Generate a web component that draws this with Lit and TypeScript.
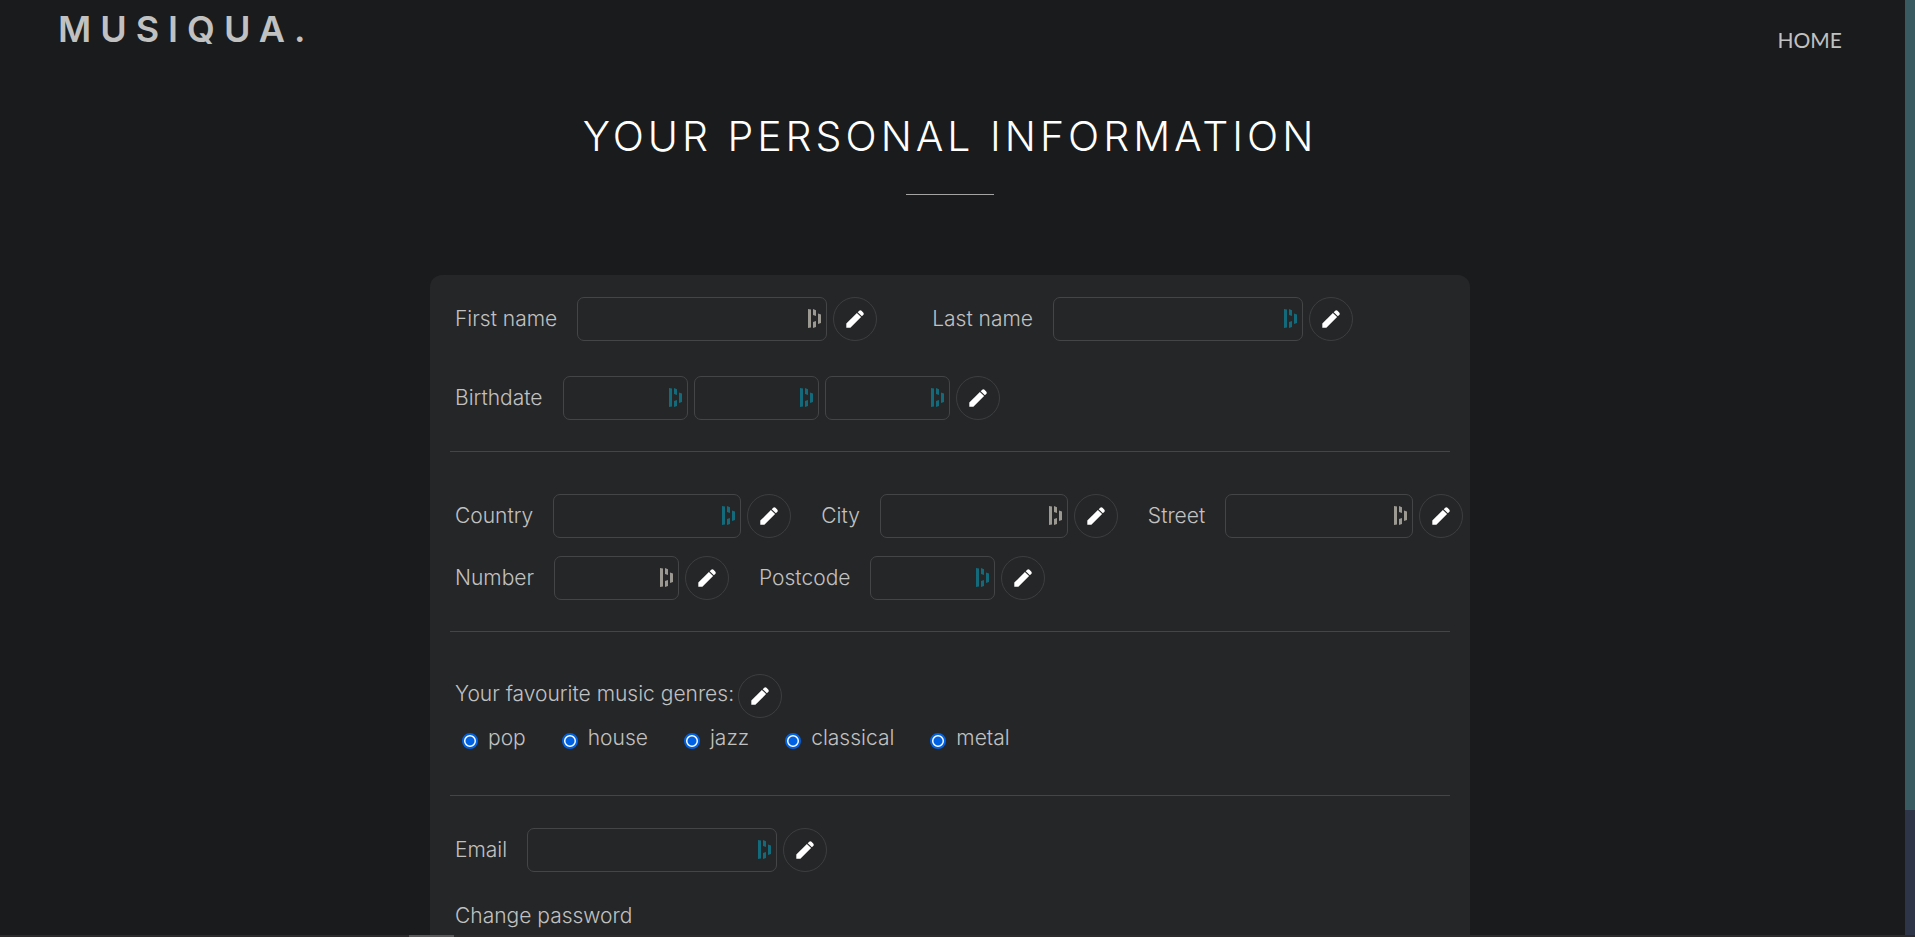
import { LitElement, html, css, svg } from "lit";
import { customElement } from "lit/decorators.js";
import { classMap } from "lit/directives/class-map.js";

type Size = "wide" | "medium" | "small";

interface Box {
  name: string;
  tone: "teal" | "grey";
}

interface Field {
  label: string;
  size: Size;
  boxes: Box[];
}

const field = (label: string, size: Size, tone: Box["tone"]): Field => ({
  label,
  size,
  boxes: [{ name: label, tone }],
});

const NAME_ROW = [field("First name", "wide", "grey"), field("Last name", "wide", "teal")];
const BIRTH_ROW: Field[] = [
  {
    label: "Birthdate",
    size: "small",
    boxes: [
      { name: "Birth day", tone: "teal" },
      { name: "Birth month", tone: "teal" },
      { name: "Birth year", tone: "teal" },
    ],
  },
];
const ADDRESS_ROW = [
  field("Country", "medium", "teal"),
  field("City", "medium", "grey"),
  field("Street", "medium", "grey"),
];
const NUMBER_ROW = [field("Number", "small", "grey"), field("Postcode", "small", "teal")];
const EMAIL_ROW = [field("Email", "wide", "teal")];
const GENRES = ["pop", "house", "jazz", "classical", "metal"];

const pencil = svg`
  <path d="M0.3 17.8 V13.6 L10.9 3 L15.1 7.1 L4.4 17.8 Z" />
  <path d="M11.7 2.2 L13 0.9 Q14.2 -0.2 15.5 0.8 L17.2 2.6 Q18.3 4 17.2 5.1 L15.9 6.3 Z" />`;

const bars = svg`
  <path d="M0 0 L3 0.5 V18.5 L0 19 Z" />
  <path d="M5 0 L8 1.2 V7 L5 6 Z" />
  <path d="M5 13 L8 12 V18 L5 19 Z" />
  <path d="M10 4.5 L13 5.5 V14 L10 15 Z" />`;

@customElement("app-root")
export class AppRoot extends LitElement {
  static styles = css`
    :host {
      display: block;
      position: relative;
      height: 100vh;
      overflow: hidden;
      background: #191b1c;
      color: #c1c1c1;
      font-family: Inter, "Liberation Sans", sans-serif;
      font-size: 21px;
      font-weight: 300;
      line-height: 28px;
    }
    * {
      box-sizing: border-box;
    }
    .frame {
      display: grid;
      grid-template-columns: minmax(0, 1fr) 10px;
      height: 100%;
    }
    .page {
      overflow: hidden;
      padding-right: 5px;
    }
    .track {
      background: #2f3548;
    }
    .thumb {
      height: 810px;
      background: #3a5a62;
    }
    .header {
      display: flex;
      justify-content: space-between;
      align-items: flex-start;
      padding: 8px 58px 0;
      height: 76px;
    }
    .logo {
      color: #c1c1c1;
      text-decoration: none;
      font-size: 36px;
      line-height: 42px;
      font-weight: 600;
      letter-spacing: 9px;
    }
    .home {
      display: block;
      color: #c1c1c1;
      text-decoration: none;
      font-family: Lato, sans-serif;
      font-weight: 400;
      padding-top: 18px;
    }
    .title {
      margin: 32px 0 0;
      text-align: center;
      color: #fff;
      font-size: 41px;
      line-height: 56px;
      font-weight: 300;
      letter-spacing: 4px;
    }
    .rule {
      width: 88px;
      height: 1px;
      margin: 30px auto 80px;
      border: 0;
      background: #a4a4a4;
    }
    .panel {
      width: min(1040px, 100% - 40px);
      margin: 0 auto;
      padding: 22px 0 60px;
      border-radius: 12px;
      background: #252628;
    }
    .section {
      margin: 0 20px;
      padding: 0 0 31px 5px;
      border-bottom: 1px solid #434547;
    }
    .section + .section {
      padding-top: 42px;
    }
    .section + .section.email {
      padding-top: 32px;
      border: 0;
    }
    .row {
      display: flex;
      column-gap: 30px;
      margin-right: -20px;
    }
    .row.names {
      column-gap: 55px;
    }
    .loose {
      margin-top: 35px;
    }
    .tight {
      margin-top: 18px;
    }
    .field {
      display: flex;
      align-items: center;
      gap: 6px;
    }
    .label {
      margin-right: 14px;
      white-space: nowrap;
    }
    .box {
      position: relative;
      display: flex;
    }
    .input {
      width: 250px;
      height: 44px;
      padding: 0 28px 0 12px;
      border: 1px solid #434547;
      border-radius: 7px;
      background: transparent;
      color: inherit;
      font: inherit;
    }
    .input.medium {
      width: 188px;
    }
    .input.small {
      width: 125px;
    }
    .bars {
      position: absolute;
      right: 6px;
      top: 12px;
      width: 13px;
      height: 19px;
      fill: #126a7b;
      pointer-events: none;
    }
    .bars.grey {
      fill: #9c9892;
    }
    .edit {
      display: grid;
      place-items: center;
      width: 44px;
      height: 44px;
      padding: 0;
      border: 1px solid #3c3e40;
      border-radius: 50%;
      background: transparent;
      cursor: pointer;
    }
    .pencil {
      width: 18px;
      height: 18px;
      fill: #fff;
    }
    .genres-head {
      display: flex;
      align-items: center;
      gap: 4px;
    }
    .genres-title {
      padding-bottom: 4px;
    }
    .genres {
      display: flex;
      column-gap: 36px;
      padding: 6px 0 12px 7px;
    }
    .genre {
      display: flex;
      align-items: center;
      gap: 10px;
    }
    .radio {
      appearance: none;
      width: 16px;
      height: 16px;
      margin: 6px 0 0;
      border: 2px solid #0062e3;
      border-radius: 50%;
      background: radial-gradient(circle, #0062e3 4px, #fff 5px);
    }
    .password {
      margin: 30px 0 0;
      font-size: 21px;
      font-weight: 300;
      line-height: 28px;
    }
    .bottom {
      position: absolute;
      left: 0;
      right: 0;
      bottom: 0;
      height: 2px;
      padding-left: 409px;
      background: #2c2a2a;
    }
    .bottom-mark {
      width: 45px;
      height: 2px;
      background: #5a5858;
    }
  `;

  private renderEdit(what: string) {
    return html`<button class="edit" type="button" aria-label="Edit ${what}">
      <svg class="pencil" viewBox="0 0 18 18" aria-hidden="true">${pencil}</svg>
    </button>`;
  }

  private renderField(f: Field) {
    const id = (b: Box) => b.name.toLowerCase().replace(" ", "-");
    return html`<div class="field">
      <label class="label" for=${id(f.boxes[0])}>${f.label}</label>
      ${f.boxes.map(
        (b) => html`<div class="box">
          <input
            class=${classMap({ input: true, [f.size]: true })}
            id=${id(b)}
            type="text"
            aria-label=${b.name}
          />
          <svg class=${classMap({ bars: true, [b.tone]: true })} viewBox="0 0 13 19" aria-hidden="true">
            ${bars}
          </svg>
        </div>`
      )}
      ${this.renderEdit(f.label)}
    </div>`;
  }

  render() {
    return html`
      <div class="frame">
        <div class="page">
          <header class="header">
            <a class="logo" href="#">MUSIQUA.</a>
            <nav><a class="home" href="#">HOME</a></nav>
          </header>
          <main>
            <h1 class="title">YOUR PERSONAL INFORMATION</h1>
            <hr class="rule" />
            <form class="panel">
              <div class="section">
                <div class="row names">${NAME_ROW.map((f) => this.renderField(f))}</div>
                <div class="row loose">${BIRTH_ROW.map((f) => this.renderField(f))}</div>
              </div>
              <div class="section">
                <div class="row">${ADDRESS_ROW.map((f) => this.renderField(f))}</div>
                <div class="row tight">${NUMBER_ROW.map((f) => this.renderField(f))}</div>
              </div>
              <div class="section">
                <div role="group" aria-labelledby="genres-title">
                  <div class="genres-head">
                    <span class="genres-title" id="genres-title">Your favourite music genres:</span>
                    ${this.renderEdit("genres")}
                  </div>
                  <div class="genres">
                    ${GENRES.map(
                      (g) => html`<label class="genre">
                        <input class="radio" type="radio" name=${g} checked />
                        <span>${g}</span>
                      </label>`
                    )}
                  </div>
                </div>
              </div>
              <div class="section email">
                <div class="row">${EMAIL_ROW.map((f) => this.renderField(f))}</div>
                <h2 class="password">Change password</h2>
              </div>
            </form>
          </main>
        </div>
        <div class="track"><div class="thumb"></div></div>
      </div>
      <div class="bottom"><div class="bottom-mark"></div></div>
    `;
  }
}
